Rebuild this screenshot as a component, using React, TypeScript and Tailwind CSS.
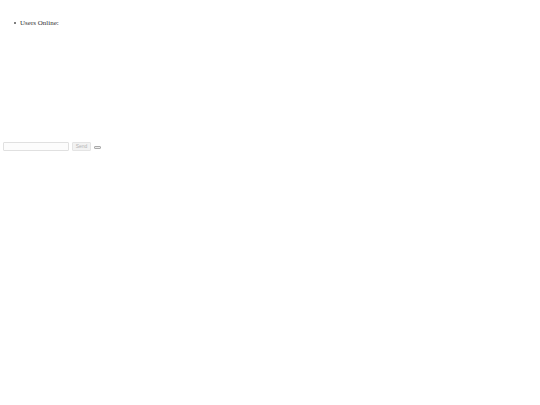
import React from 'react'

const App: React.FC = () => {
  return (
    <div className="w-[540px] h-[405px] bg-white font-['Liberation_Serif',serif] text-[7px] text-[#333]">
      {/* users list */}
      <ul className="list-none pl-[14px] pt-[19px] h-[142px]">
        <li className="flex items-center gap-[4px] leading-[8px]">
          <span className="w-[2px] h-[2px] rounded-full bg-[#555]" />
          <span>Users Online:</span>
        </li>
      </ul>

      {/* message form */}
      <div className="flex items-end gap-[3px] pl-[3px]">
        <input
          type="text"
          className="w-[66px] h-[9px] border border-[#e0e0e0] bg-[#fcfcfc] rounded-[1px]"
        />
        <button
          disabled
          className="w-[19px] h-[9px] border border-[#e4e4e4] bg-[#f2f2f2] text-[#b4b4b4] text-[5px] font-['Liberation_Sans',sans-serif] leading-none rounded-[1px]"
        >
          Send
        </button>
        <button className="w-[7px] h-[3px] mb-[2px] border border-[#aaaaaa] bg-[#eeeeee] rounded-[1px]" />
      </div>
    </div>
  )
}

export default App
